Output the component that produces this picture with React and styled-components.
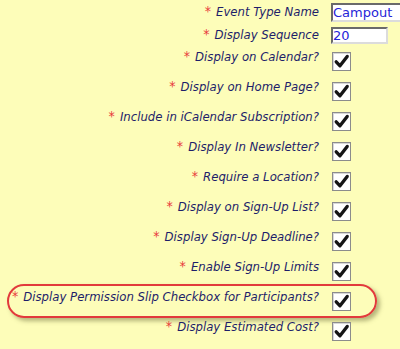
import React from "react";
import styled, { createGlobalStyle, css } from "styled-components";

const Global = createGlobalStyle`
  html, body { margin: 0; padding: 0; background: #fdfdb9; }
  body { font-family: "DejaVu Sans", Verdana, sans-serif; overflow: hidden; }
`;

const Page = styled.div`
  width: 400px;
  height: 349px;
  background: #fdfdb9;
  overflow: hidden;
`;

const Form = styled.div`
  display: flex;
  flex-direction: column;
`;

const Row = styled.div`
  position: relative;
  display: grid;
  grid-template-columns: 319px auto;
  column-gap: 12px;
  align-items: start;
  height: ${(p) => p.$h}px;
  ${(p) =>
    p.$highlight &&
    css`
      &::before {
        content: "";
        position: absolute;
        left: 7px;
        top: -3px;
        width: 366px;
        height: 30px;
        border: 2px solid #e23a3c;
        border-radius: 18px;
        box-shadow: 3px 3px 4px rgba(110, 110, 60, 0.5);
        pointer-events: none;
      }
    `}
`;

const Label = styled.div`
  justify-self: end;
  font-family: "DejaVu Sans Condensed", "DejaVu Sans", Verdana, sans-serif;
  font-size: 13px;
  line-height: 16px;
  font-style: italic;
  color: #1e1e6a;
  white-space: nowrap;
  padding-top: ${(p) => p.$pt}px;
`;

const Star = styled.span`
  color: #e8393b;
  font-style: normal;
  font-size: 14px;
  line-height: 0;
  margin-right: 5px;
`;

const TextInput = styled.div`
  box-sizing: border-box;
  margin-top: ${(p) => p.$mt}px;
  width: ${(p) => p.$w}px;
  height: ${(p) => p.$h}px;
  background: #fff;
  border-top: 2px solid #6a6a6a;
  border-left: 2px solid #6a6a6a;
  border-right: 2px solid #dcdcdc;
  border-bottom: 2px solid #dcdcdc;
  font-size: 13px;
  line-height: ${(p) => p.$h - 4}px;
  color: #2424d8;
  padding-left: 0px;
  white-space: nowrap;
  overflow: hidden;
`;

const Box = styled.div`
  box-sizing: border-box;
  margin-top: 5px;
  margin-left: 1px;
  width: 19px;
  height: 19px;
  background: #fff;
  border: 1px solid #8c8c8c;
  box-shadow: inset 1px 1px 0 #d8d8d8;
  display: flex;
  align-items: center;
  justify-content: center;
`;

const Check = () => (
  <Box>
    <svg width="17" height="17" viewBox="0 0 17 17">
      <path
        d="M3.2 8.8 L7 12.8 L14.2 3.4"
        fill="none"
        stroke="#151515"
        strokeWidth="3.3"
        strokeLinecap="round"
        strokeLinejoin="round"
      />
    </svg>
  </Box>
);

const checks = [
  "Display on Calendar?",
  "Display on Home Page?",
  "Include in iCalendar Subscription?",
  "Display In Newsletter?",
  "Require a Location?",
  "Display on Sign-Up List?",
  "Display Sign-Up Deadline?",
  "Enable Sign-Up Limits",
  "Display Permission Slip Checkbox for Participants?",
  "Display Estimated Cost?",
];

export default function App() {
  return (
    <Page>
      <Global />
      <Form>
        <Row $h={24}>
          <Label $pt={4}>
            <Star>*</Star>Event Type Name
          </Label>
          <TextInput $mt={3} $w={80} $h={19}>Campout</TextInput>
        </Row>
        <Row $h={23}>
          <Label $pt={3}>
            <Star>*</Star>Display Sequence
          </Label>
          <TextInput $mt={3} $w={57} $h={17}>20</TextInput>
        </Row>
        {checks.map((c) => (
          <Row key={c} $h={30} $highlight={c.startsWith("Display Permission")}>
            <Label $pt={2}>
              <Star>*</Star>
              {c}
            </Label>
            <Check />
          </Row>
        ))}
      </Form>
    </Page>
  );
}
